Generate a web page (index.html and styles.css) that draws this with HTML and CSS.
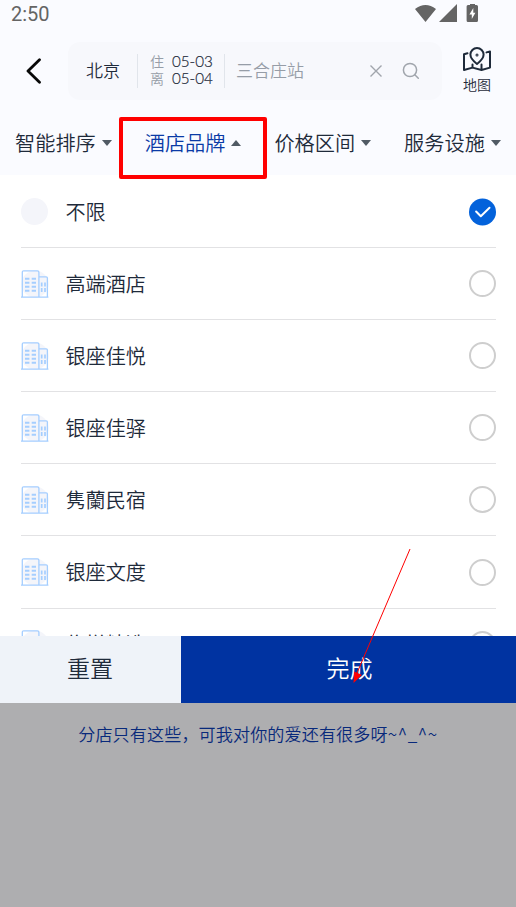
FILE: index.html
```html
<!DOCTYPE html>
<html lang="zh-CN">
<head>
<meta charset="utf-8">
<title>酒店品牌</title>
<link rel="stylesheet" href="styles.css">
</head>
<body>
<svg class="defs" width="0" height="0">
  <symbol id="hotel" viewBox="0 0 28 28">
    <circle cx="14" cy="14" r="13.6" fill="#f4f5fa"/>
    <g fill="none" stroke="#a5ceff" stroke-width="1.3">
      <path d="M1.3 27V2.200Q1.300 .8 2.700 .8H16.400Q17.900 .8 17.900 2.200V27M17.900 6.800H25.200Q26.400 6.800 26.400 8V27M0 27.100H27.400"/>
      <path stroke-width="2" d="M4 8.700H8.400M10.700 8.700H15M4 12.700H8.400M10.700 12.700H15M4 16.700H8.400M10.700 16.700H15M4 20.700H8.400M10.700 20.700H15"/>
      <path stroke-width="1.700" d="M20.700 12.500V16.500M24 12.500V16.500M20.700 18V22M24 18V22"/>
    </g>
  </symbol>
</svg>
<div class="screen">
  <header class="top">
    <div class="status">
      <span class="clock">2:50</span>
      <svg class="status-icons" width="64" height="20" viewBox="0 0 64 20" fill="#646464">
        <path d="M0 5Q10.500-3 21 5L10.500 18ZM24 18L42 0V18ZM55 1V0H60V1H61.500Q63 1 63 2.500V16.500Q63 18 61.500 18H53Q51.600 18 51.600 16.500V2.500Q51.600 1 53 1Z"/>
        <path fill="#fff" d="M58.300 4L54.400 10.500H56.800V15L60.400 8.800H58.300Z"/>
      </svg>
    </div>
    <div class="searchbar">
      <svg class="back" width="16" height="26" viewBox="0 0 16 26"><path d="M13.500 1.700L2 13L13.500 24.300" fill="none" stroke="#080808" stroke-width="2.800" stroke-linecap="round" stroke-linejoin="round"/></svg>
      <div class="search">
        <span class="city">北京</span>
        <div class="dates">
          <div><i>住</i><b>05-03</b></div>
          <div><i>离</i><b>05-04</b></div>
        </div>
        <span class="keyword">三合庄站</span>
        <svg class="clear" width="14" height="14" viewBox="0 0 14 14"><path d="M1.500 1.500L12.500 12.500M12.500 1.500L1.500 12.500" stroke="#a0a5ac" stroke-width="1.400"/></svg>
        <svg class="find" width="18" height="18" viewBox="0 0 18 18" fill="none" stroke="#a0a5ac" stroke-width="1.500" stroke-linecap="round"><circle cx="8" cy="8" r="6.600"/><path d="M12.800 12.800L16.300 16.300"/></svg>
      </div>
      <div class="map">
        <svg width="28" height="25" viewBox="0 0 28 25" fill="none" stroke="#1e2a3a" stroke-width="2" stroke-linejoin="round" stroke-linecap="round">
          <path d="M4.500 6.200L1 7.300V23L9.500 20.600L18.500 23L27 20.600V4.500L23.500 5.400M9.500 20.500V17.500M18.500 22.500V17.500"/>
          <path d="M14 17Q7.400 12 7.400 7.600A6.600 6.600 0 0 1 20.600 7.600Q20.600 12 14 17Z"/><circle cx="14" cy="8" r=".5"/>
        </svg>
        <span>地图</span>
      </div>
    </div>
    <nav class="tabs">
      <div class="tab">智能排序<em></em></div>
      <div class="tab active">酒店品牌<em></em></div>
      <div class="tab">价格区间<em></em></div>
      <div class="tab">服务设施<em></em></div>
    </nav>
  </header>
  <main class="brands">
    <div class="row"><span class="dot"></span><span class="name">不限</span><svg class="checked" width="28" height="28" viewBox="0 0 28 28"><circle cx="13.500" cy="14" r="13.500" fill="#0362db"/><path d="M7.100 13.500L11.800 18.200L20.500 9.800" fill="none" stroke="#fff" stroke-width="2" stroke-linecap="round" stroke-linejoin="round"/></svg></div>
    <div class="row"><svg class="hotel"><use href="#hotel"/></svg><span class="name">高端酒店</span><span class="radio"></span></div>
    <div class="row"><svg class="hotel"><use href="#hotel"/></svg><span class="name">银座佳悦</span><span class="radio"></span></div>
    <div class="row"><svg class="hotel"><use href="#hotel"/></svg><span class="name">银座佳驿</span><span class="radio"></span></div>
    <div class="row"><svg class="hotel"><use href="#hotel"/></svg><span class="name">隽蘭民宿</span><span class="radio"></span></div>
    <div class="row"><svg class="hotel"><use href="#hotel"/></svg><span class="name">银座文度</span><span class="radio"></span></div>
    <div class="row"><svg class="hotel"><use href="#hotel"/></svg><span class="name">佲悦精选</span><span class="radio"></span></div>
  </main>
  <div class="actions"><div class="reset">重置</div><div class="done">完成</div></div>
  <footer class="footer">分店只有这些，可我对你的爱还有很多呀<span class="face">~^_^~</span></footer>
  <div class="highlight"></div>
  <svg class="arrow" width="64" height="140" viewBox="0 0 64 140"><path d="M60 1L7 125" stroke="#f00" stroke-width="1"/><path d="M3.500 135L4.300 123.500L12 127Z" fill="#f00"/></svg>
</div>
</body>
</html>
```
FILE: styles.css
```css
* { box-sizing: border-box; }
body { margin: 0; font-family: "Noto Sans CJK SC", sans-serif; font-weight: 350; color: #1e2a3a; }
.defs { display: block; position: absolute; }
.screen { position: relative; width: 516px; height: 907px; overflow: hidden; display: flex; flex-direction: column; background: #aeaeb0; }
.top { height: 175px; flex: none; background: #fafbff; }
.status { height: 42px; display: flex; justify-content: space-between; padding: 4px 39px 0 11px; }
.clock { font: 400 20px/21px Roboto, sans-serif; color: #646464; }
.status-icons { margin-right: -2px; }
.searchbar { height: 58px; display: flex; align-items: center; padding-left: 26px; }
.search { width: 374px; height: 58px; margin-left: 26px; border-radius: 12px; background: #f7f8fc; display: flex; align-items: center; }
.city { width: 69px; padding: 0 0 3px 18px; font-size: 17px; }
.dates { height: 34px; width: 88px; border: solid #e1e5eb; border-width: 0 1px; padding-left: 12px; }
.dates div { display: flex; height: 17.5px; align-items: center; line-height: 17px; position: relative; top: -1.5px; }
.dates i { width: 22px; font-style: normal; font-size: 14px; color: #969da7; }
.dates b { font-family: Lato, sans-serif; font-weight: 300; font-size: 15.2px; -webkit-text-stroke: .2px; }
.keyword { width: 133px; padding: 0 0 3px 11px; font-size: 17px; color: #969da7; }
.clear { margin-left: 11px; }
.find { margin-left: 19px; }
.map { width: 28px; margin-left: 21px; margin-top: -2px; font-size: 14px; line-height: 18px; display: flex; flex-direction: column; }
.map span { margin-top: 3px; white-space: nowrap; }
.tabs { height: 75px; display: flex; padding-top: 28px; padding-left: 15px; }
.tab { height: 30px; width: 129.7px; flex: none; display: flex; align-items: center; gap: 6px; font-size: 20.2px; line-height: 30px; white-space: nowrap; }
.tab em { border: 5.5px solid transparent; border-top: 6px solid #505a64; border-bottom: 0; }
.tab.active { color: #0a3aa6; }
.active em { border-top: 0; border-bottom: 6px solid #505a64; }
.brands { height: 461px; flex: none; overflow: hidden; background: #fff; padding: 1px 20px 0 21px; }
.row { height: 72.1px; display: flex; align-items: center; border-bottom: 1.5px solid #e2e2e4; }
.dot, .hotel, .radio { width: 27px; height: 27px; }
.hotel { height: 28px; width: 28px; margin-right: -1px; }
.dot { border-radius: 50%; background: #f4f5fa; }
.checked { margin-right: -1px; }
.name { flex: 1; margin-left: 17.5px; font-size: 20.1px; line-height: 30px; }
.radio { border: 2px solid #cecece; border-radius: 50%; }
.actions { height: 67px; flex: none; display: flex; font-size: 23px; line-height: 62px; text-align: center; }
.reset { width: 181px; padding-right: 1px; background: #eff3f9; }
.done { flex: 1; padding-left: 2px; background: #0033a1; color: #fff; }
.footer { padding-top: 18px; text-align: center; font-size: 17.1px; line-height: 26px; color: #08297b; letter-spacing: .1px; }
.face { letter-spacing: .6px; }
.highlight { position: absolute; left: 119px; top: 117px; width: 148px; height: 62px; border: 4px solid #f00; border-radius: 2px; }
.arrow { position: absolute; left: 350px; top: 548px; }
```
